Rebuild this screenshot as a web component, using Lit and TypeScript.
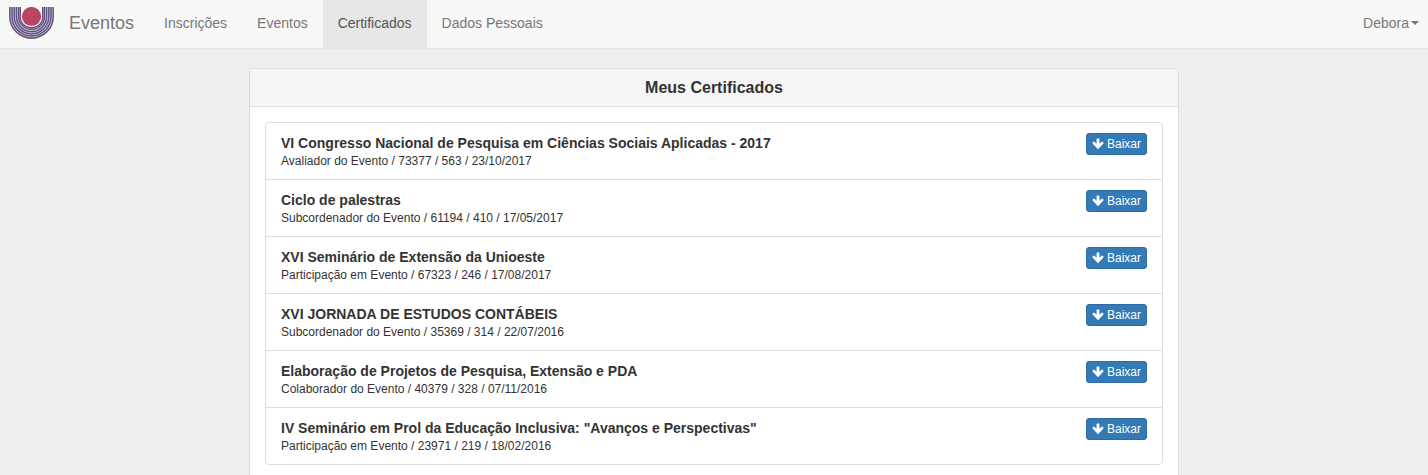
import { LitElement, html, css, svg, nothing } from "lit";
import { customElement, property, state } from "lit/decorators.js";

interface Certificate {
  title: string;
  role: string;
  register: string;
  page: string;
  date: string;
}

@customElement("certificate-item")
class CertificateItem extends LitElement {
  @property({ attribute: false }) item!: Certificate;

  static styles = css`
    :host {
      display: flex;
      justify-content: space-between;
      align-items: flex-start;
      gap: 16px;
      padding: 10px 15px;
    }
    .title {
      margin: 0;
      font-size: 14px;
      line-height: 20px;
      font-weight: bold;
    }
    .details {
      margin: 0;
      font-size: 12px;
      line-height: 16px;
    }
    .download {
      display: flex;
      align-items: center;
      gap: 3px;
      padding: 1px 5px;
      border: 1px solid #2e6da4;
      border-radius: 3px;
      background: #337ab7;
      color: #fff;
      font: 12px/18px "Liberation Sans", Arial, sans-serif;
      cursor: pointer;
    }
    .download:hover {
      background: #286090;
    }
    .arrow {
      width: 12px;
      height: 12px;
      fill: #fff;
    }
  `;

  render() {
    const { title, role, register, page, date } = this.item;
    return html`
      <div>
        <h4 class="title">${title}</h4>
        <p class="details">${role} / ${register} / ${page} / ${date}</p>
      </div>
      <button class="download" type="button">
        <svg class="arrow" viewBox="0 0 12 12" aria-hidden="true">
          <path d="M4.6 1Q4.6.5 5.1.5h1.8q.5 0 .5.5v4.8l2.2-2.1q.4-.4.8 0l1 .9q.4.4 0 .8L6.5 10.8q-.5.5-1 0L.6 5.4q-.4-.4 0-.8l1-.9q.4-.4.8 0l2.2 2.1z" />
        </svg>
        Baixar
      </button>
    `;
  }
}

@customElement("app-root")
class AppRoot extends LitElement {
  @state() private current = "Certificados";

  private links = ["Inscrições", "Eventos", "Certificados", "Dados Pessoais"];

  private certificates: Certificate[] = [
    { title: "VI Congresso Nacional de Pesquisa em Ciências Sociais Aplicadas - 2017", role: "Avaliador do Evento", register: "73377", page: "563", date: "23/10/2017" },
    { title: "Ciclo de palestras", role: "Subcordenador do Evento", register: "61194", page: "410", date: "17/05/2017" },
    { title: "XVI Seminário de Extensão da Unioeste", role: "Participação em Evento", register: "67323", page: "246", date: "17/08/2017" },
    { title: "XVI JORNADA DE ESTUDOS CONTÁBEIS", role: "Subcordenador do Evento", register: "35369", page: "314", date: "22/07/2016" },
    { title: "Elaboração de Projetos de Pesquisa, Extensão e PDA", role: "Colaborador do Evento", register: "40379", page: "328", date: "07/11/2016" },
    { title: 'IV Seminário em Prol da Educação Inclusiva: "Avanços e Perspectivas"', role: "Participação em Evento", register: "23971", page: "219", date: "18/02/2016" },
  ];

  static styles = css`
    :host {
      display: flow-root;
      min-height: 100vh;
      background: #eee;
      color: #333;
      font: 14px/20px "Liberation Sans", Arial, sans-serif;
    }
    .navbar {
      display: flex;
      align-items: stretch;
      background: #f8f8f8;
      border-bottom: 1px solid #e7e7e7;
    }
    .brand {
      display: flex;
      align-items: center;
      gap: 15px;
      padding: 0 15px 2px 9px;
      color: #777;
      font-size: 18px;
      text-decoration: none;
    }
    .logo {
      width: 45px;
      height: 32px;
    }
    .links {
      display: flex;
      flex: 1;
      margin: 0;
      padding: 0;
      list-style: none;
    }
    .link {
      display: block;
      padding: 13px 15px 15px;
      color: #777;
      text-decoration: none;
    }
    .link:hover {
      color: #333;
    }
    .link[aria-current] {
      background: #e7e7e7;
      color: #555;
    }
    .user {
      display: flex;
      align-items: center;
      gap: 2px;
      padding: 0 9px 2px;
      border: 0;
      background: none;
      color: #777;
      font: inherit;
      cursor: pointer;
    }
    .caret {
      border: 4px solid transparent;
      border-top-color: currentColor;
      border-bottom: 0;
    }
    .panel {
      max-width: 928px;
      margin: 19px auto 20px;
      border: 1px solid #ddd;
      border-radius: 4px;
      background: #fff;
      box-shadow: 0 1px 1px rgba(0, 0, 0, 0.05);
    }
    .heading {
      margin: 0;
      padding: 9px 15px 8px;
      border-bottom: 1px solid #ddd;
      border-radius: 3px 3px 0 0;
      background: #f5f5f5;
      font-size: 16px;
      line-height: 20px;
      text-align: center;
    }
    .list {
      margin: 15px;
      padding: 0;
      border: 1px solid #ddd;
      border-radius: 4px;
      list-style: none;
    }
    .row + .row {
      border-top: 1px solid #ddd;
    }
  `;

  private logo() {
    const radii = [21.7, 19.5, 17.3, 15.1, 12.9, 11.2];
    return html`
      <svg class="logo" viewBox="0 0 45 32" aria-hidden="true">
        <path d="M5.6 0V9.5A16.9 16.9 0 0 0 39.4 9.5V0" fill="none" stroke="#cdc6d8" stroke-width="11" />
        <g fill="none" stroke="#5f4f7e" stroke-width="1.4">
          ${radii.map(
            (r) => svg`<path d="M${22.5 - r} 0V9.5A${r} ${r} 0 0 0 ${22.5 + r} 9.5V0" />`
          )}
        </g>
        <circle cx="22.5" cy="9.5" r="10.6" fill="#f8f8f8" />
        <circle cx="22.5" cy="9.5" r="9.6" fill="#b94565" />
      </svg>
    `;
  }

  private select(event: Event, name: string) {
    event.preventDefault();
    this.current = name;
  }

  render() {
    return html`
      <nav class="navbar">
        <a class="brand" href="#">${this.logo()}Eventos</a>
        <ul class="links">
          ${this.links.map(
            (name) => html`<li>
              <a
                class="link"
                href="#"
                aria-current=${name === this.current ? "page" : nothing}
                @click=${(e: Event) => this.select(e, name)}
                >${name}</a
              >
            </li>`
          )}
        </ul>
        <button class="user" type="button" aria-haspopup="true">Debora<span class="caret"></span></button>
      </nav>
      <main class="panel">
        <h3 class="heading">Meus Certificados</h3>
        <ul class="list">
          ${this.certificates.map(
            (item) => html`<li class="row"><certificate-item .item=${item}></certificate-item></li>`
          )}
        </ul>
      </main>
    `;
  }
}
